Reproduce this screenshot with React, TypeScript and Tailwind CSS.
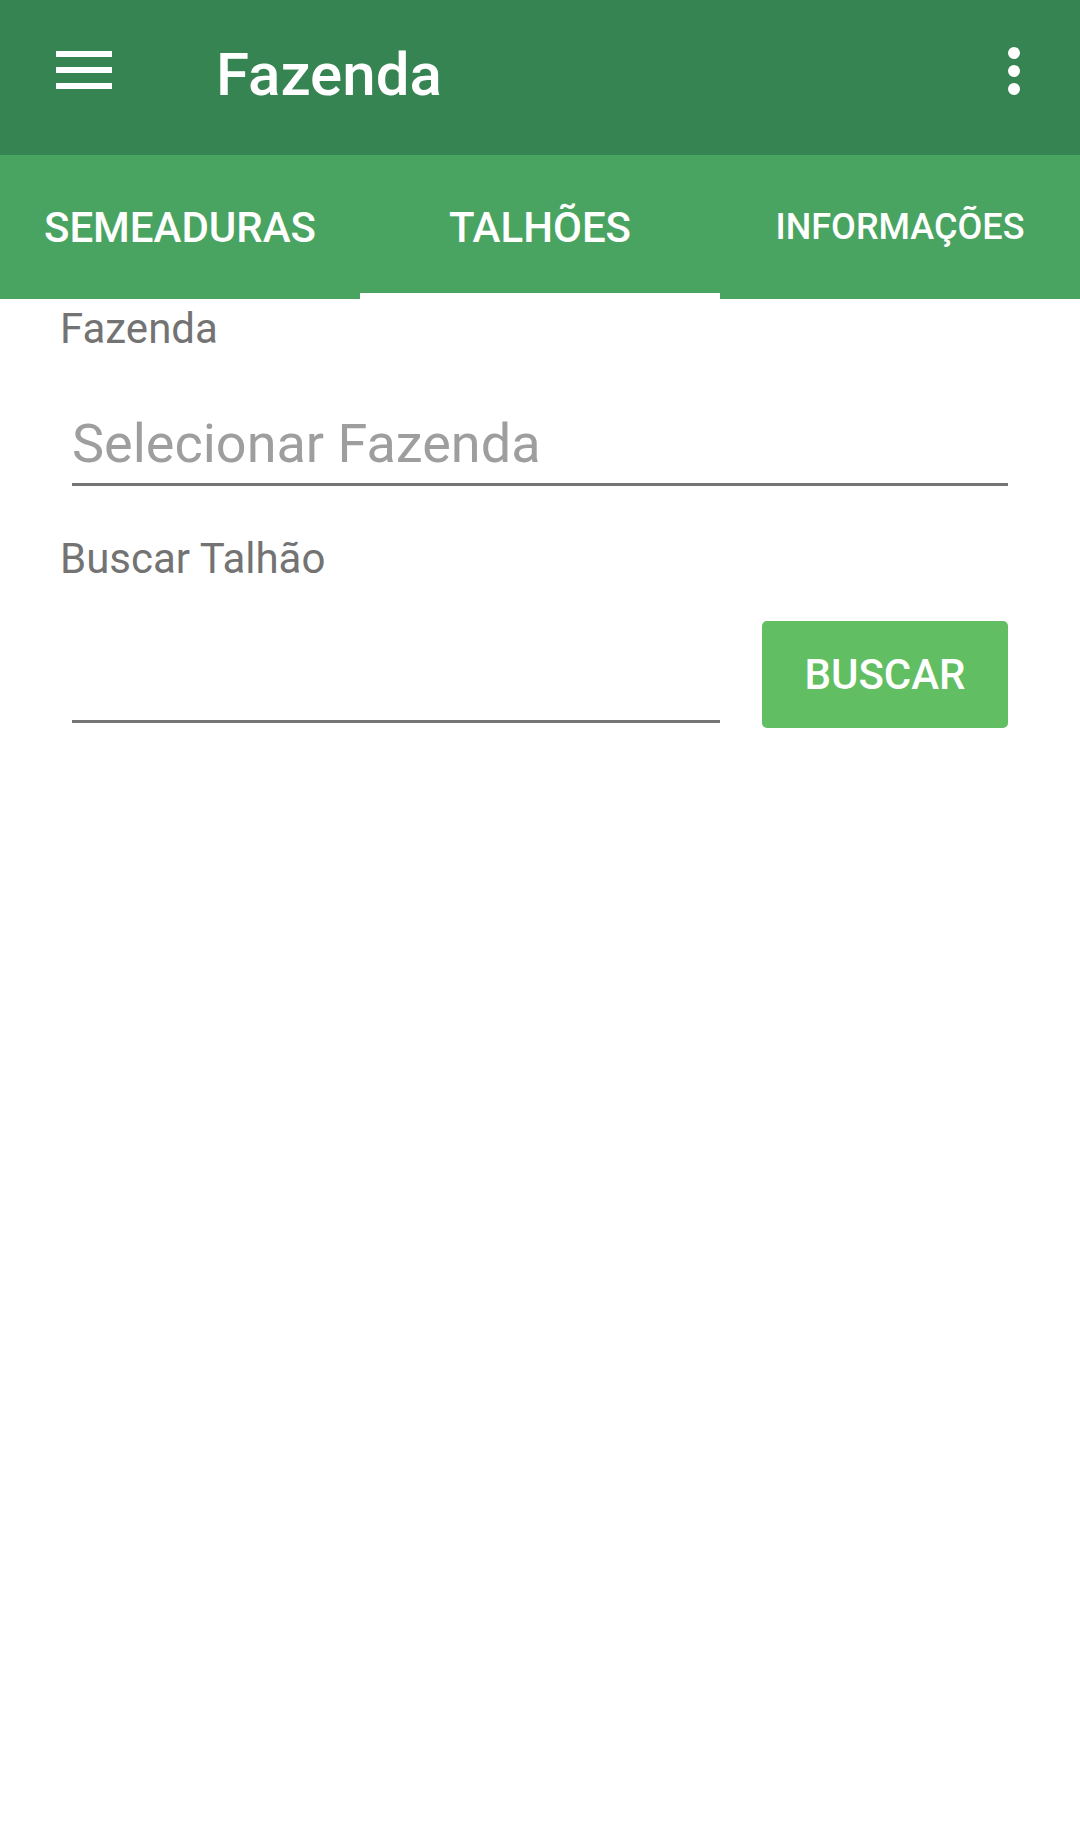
export default function App() {
  return (
    <div
      className="w-[1080px] h-[1835px] bg-white"
      style={{ fontFamily: "Roboto, 'Liberation Sans', sans-serif" }}
    >
      {/* toolbar */}
      <div className="h-[155px] bg-[#378453] flex items-start">
        <div className="pl-[56px] pt-[51px] flex flex-col gap-[10px]">
          <div className="h-[6px] w-[56px] bg-white" />
          <div className="h-[6px] w-[56px] bg-white" />
          <div className="h-[6px] w-[56px] bg-white" />
        </div>
        <h1 className="ml-[104px] mt-[45px] text-[60px] leading-none font-medium text-white">
          Fazenda
        </h1>
        <div className="ml-auto mr-[60px] mt-[47px] flex flex-col gap-[6px]">
          <div className="h-[12px] w-[12px] rounded-full bg-white" />
          <div className="h-[12px] w-[12px] rounded-full bg-white" />
          <div className="h-[12px] w-[12px] rounded-full bg-white" />
        </div>
      </div>

      {/* tabs */}
      <div className="h-[144px] bg-[#4aa461] grid grid-cols-3">
        <div className="flex items-center justify-center text-[42px] font-medium text-white">
          SEMEADURAS
        </div>
        <div className="flex items-center justify-center text-[42px] font-medium text-white shadow-[inset_0_-6px_0_#ffffff]">
          TALHÕES
        </div>
        <div className="flex items-center justify-center text-[36px] font-medium text-white">
          INFORMAÇÕES
        </div>
      </div>

      {/* form */}
      <div className="pl-[60px] pr-[72px]">
        <div className="mt-[9px] text-[42px] leading-none text-[#737373]">Fazenda</div>
        <div className="ml-[12px] mt-[67px] pb-[12px] border-b-[3px] border-[#757575] text-[54px] leading-none text-[#9e9e9e]">
          Selecionar Fazenda
        </div>
        <div className="mt-[52px] text-[42px] leading-none text-[#737373]">Buscar Talhão</div>
        <div className="mt-[41px] flex items-start">
          <div className="ml-[12px] w-[648px] h-[102px] border-b-[3px] border-[#757575]" />
          <button className="ml-[42px] w-[246px] h-[107px] rounded-[5px] bg-[#61be62] text-[42px] font-medium text-white flex items-center justify-center">
            BUSCAR
          </button>
        </div>
      </div>
    </div>
  );
}
